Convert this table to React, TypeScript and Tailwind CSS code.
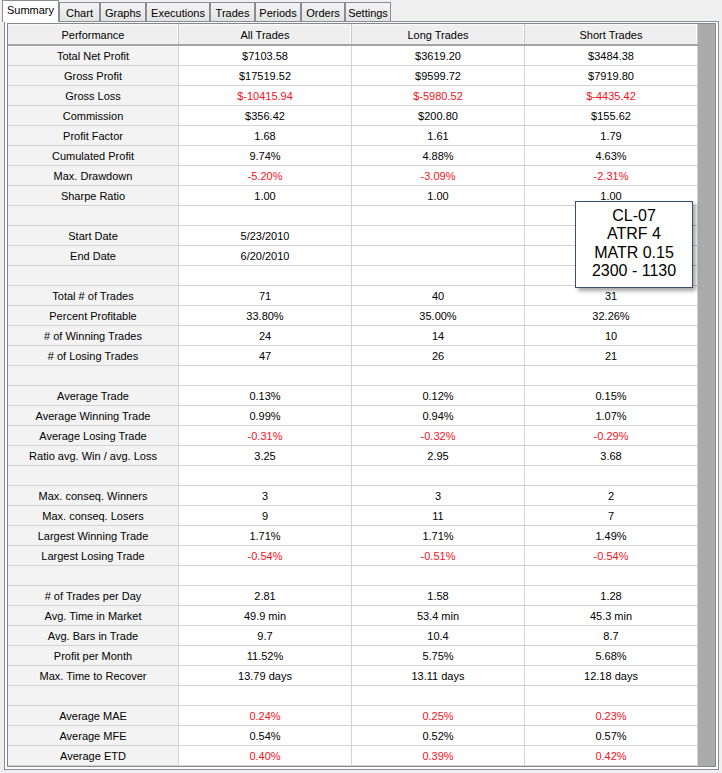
import React from "react";

type Row = [string, string, string, string, boolean] | null;

const rows: Row[] = [
  ["Total Net Profit", "$7103.58", "$3619.20", "$3484.38", false],
  ["Gross Profit", "$17519.52", "$9599.72", "$7919.80", false],
  ["Gross Loss", "$-10415.94", "$-5980.52", "$-4435.42", true],
  ["Commission", "$356.42", "$200.80", "$155.62", false],
  ["Profit Factor", "1.68", "1.61", "1.79", false],
  ["Cumulated Profit", "9.74%", "4.88%", "4.63%", false],
  ["Max. Drawdown", "-5.20%", "-3.09%", "-2.31%", true],
  ["Sharpe Ratio", "1.00", "1.00", "1.00", false],
  null,
  ["Start Date", "5/23/2010", "", "", false],
  ["End Date", "6/20/2010", "", "", false],
  null,
  ["Total # of Trades", "71", "40", "31", false],
  ["Percent Profitable", "33.80%", "35.00%", "32.26%", false],
  ["# of Winning Trades", "24", "14", "10", false],
  ["# of Losing Trades", "47", "26", "21", false],
  null,
  ["Average Trade", "0.13%", "0.12%", "0.15%", false],
  ["Average Winning Trade", "0.99%", "0.94%", "1.07%", false],
  ["Average Losing Trade", "-0.31%", "-0.32%", "-0.29%", true],
  ["Ratio avg. Win / avg. Loss", "3.25", "2.95", "3.68", false],
  null,
  ["Max. conseq. Winners", "3", "3", "2", false],
  ["Max. conseq. Losers", "9", "11", "7", false],
  ["Largest Winning Trade", "1.71%", "1.71%", "1.49%", false],
  ["Largest Losing Trade", "-0.54%", "-0.51%", "-0.54%", true],
  null,
  ["# of Trades per Day", "2.81", "1.58", "1.28", false],
  ["Avg. Time in Market", "49.9 min", "53.4 min", "45.3 min", false],
  ["Avg. Bars in Trade", "9.7", "10.4", "8.7", false],
  ["Profit per Month", "11.52%", "5.75%", "5.68%", false],
  ["Max. Time to Recover", "13.79 days", "13.11 days", "12.18 days", false],
  null,
  ["Average MAE", "0.24%", "0.25%", "0.23%", true],
  ["Average MFE", "0.54%", "0.52%", "0.57%", false],
  ["Average ETD", "0.40%", "0.39%", "0.42%", true],
];

const tabs: { name: string; w: string }[] = [
  { name: "Chart", w: "w-[41px]" },
  { name: "Graphs", w: "w-[46px]" },
  { name: "Executions", w: "w-[64px]" },
  { name: "Trades", w: "w-[45px]" },
  { name: "Periods", w: "w-[46px]" },
  { name: "Orders", w: "w-[44px]" },
  { name: "Settings", w: "w-[46px]" },
];

export default function App() {
  return (
    <div className="relative w-[722px] h-[773px] overflow-hidden bg-[#f0f0f0] text-[11px] text-black font-['Liberation_Sans',Arial,sans-serif]">
      {/* Tab strip */}
      <div className="flex items-end h-[21px] pl-[2px]">
        <div className="relative z-10 -mb-px h-[22px] w-[57px] bg-white border border-b-0 border-[#898c95] flex items-start justify-center pt-[3px] leading-[13px]">
          Summary
        </div>
        {tabs.map((t) => (
          <div
            key={t.name}
            className={`${t.w} h-[19px] border border-b-0 border-[#898c95] bg-linear-to-b from-[#f4f4f4] to-[#e2e2e2] flex items-center justify-center pt-[2px] leading-[13px]`}
          >
            {t.name}
          </div>
        ))}
      </div>

      {/* Panel */}
      <div className="ml-[4px] w-[715px] border border-[#898c95] bg-white pt-px px-[2px] pb-[2px]">
        <div className="flex border border-[#828790]">
          <div className="flex flex-col w-[690px]">
            {/* header */}
            <div className="grid grid-cols-[171px_173px_173px_173px] h-[22px] bg-[#efefef] border-b-2 border-[#a5a5a5]">
              {["Performance", "All Trades", "Long Trades", "Short Trades"].map((h) => (
                <div
                  key={h}
                  className="border-r border-[#c8c8c8] shadow-[inset_-1px_0_0_#ffffff,inset_0_1px_0_#f8f8f8] flex items-center justify-center pt-[3px] leading-[13px]"
                >
                  {h}
                </div>
              ))}
            </div>
            {rows.map((r, i) => (
              <div
                key={i}
                className="grid grid-cols-[171px_173px_173px_173px] h-[20px] border-b border-[#d3d3d3]"
              >
                <div className="bg-[#f3f3f3] border-r border-[#d3d3d3] flex items-center justify-center pt-px leading-[13px]">
                  {r ? r[0] : ""}
                </div>
                {[1, 2, 3].map((c) => (
                  <div
                    key={c}
                    className={`bg-white border-r border-[#d3d3d3] flex items-center justify-center pt-px leading-[13px] ${
                      r && r[4] ? "text-[#f5101c]" : "text-black"
                    }`}
                  >
                    {r ? (r[c] as string) : ""}
                  </div>
                ))}
              </div>
            ))}
          </div>
          <div className="w-[18px] bg-[#ababab]" />
        </div>
      </div>

      {/* Tooltip */}
      <div className="absolute left-[575px] top-[201px] w-[118px] h-[87px] bg-white border border-[#3d4f6c] shadow-[3px_3px_4px_rgba(0,0,0,0.35)] flex flex-col items-center justify-center text-[16px] leading-[18.5px] pb-[2px]">
        <div>CL-07</div>
        <div>ATRF 4</div>
        <div>MATR 0.15</div>
        <div>2300 - 1130</div>
      </div>
    </div>
  );
}
